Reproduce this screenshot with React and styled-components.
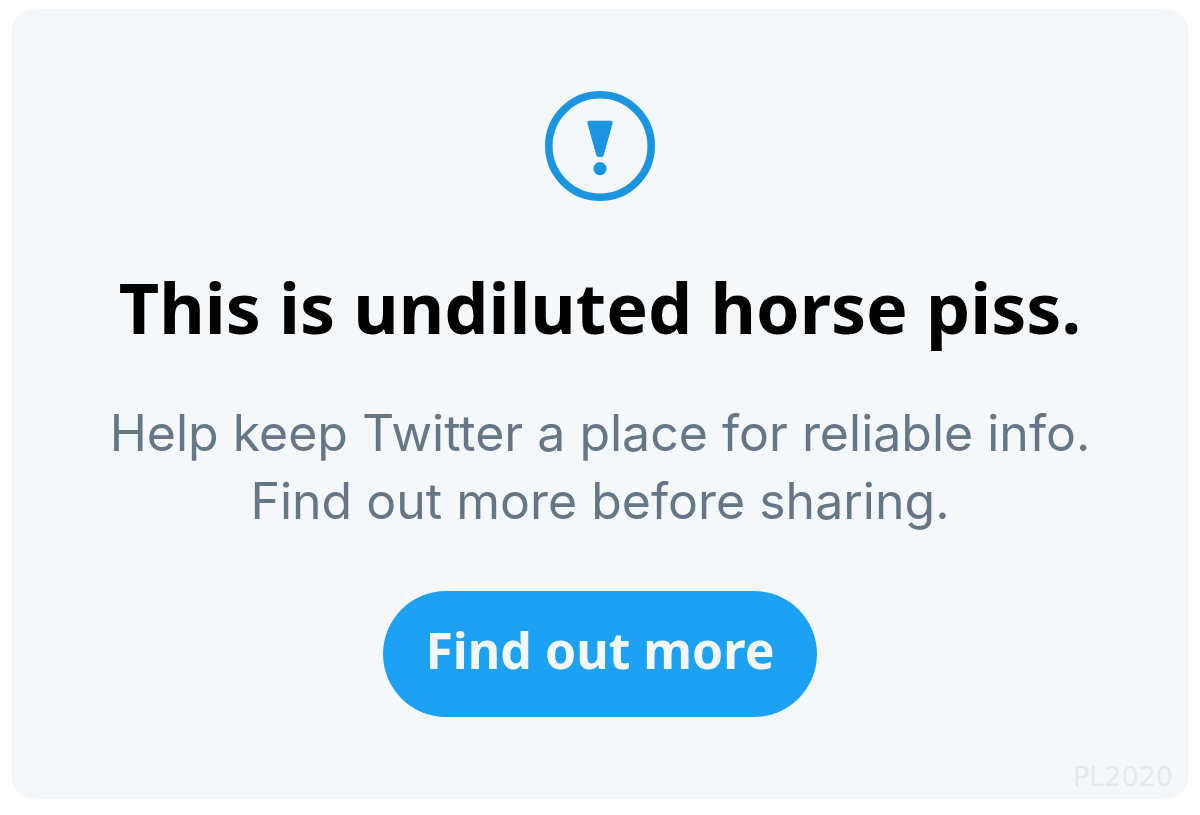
import React from 'react'
import styled, { createGlobalStyle } from 'styled-components'

const GlobalStyle = createGlobalStyle`
    * {
        box-sizing: border-box;
    }
    body {
        margin: 0;
        background: #ffffff;
    }
`
const Page = styled.main`
    display: flex;
    flex-direction: column;
    min-height: 100vh;
    padding: 9px 11px 16px;
`
const Card = styled.section`
    display: flex;
    flex-direction: column;
    align-items: center;
    flex-grow: 1;
    padding: 82px 16px 8px;
    border-radius: 24px;
    background: #f4f8fb;
    text-align: center;
`
const Icon = styled.svg`
    display: block;
    width: 110px;
    height: 110px;
`
const Title = styled.h1`
    margin: 56px 0 0;
    font-family: "Noto Sans", sans-serif;
    font-weight: 700;
    font-size: 70px;
    line-height: 100px;
    color: #000000;
`
const Descr = styled.p`
    margin: 42px 0 0;
    font-family: Inter, sans-serif;
    font-size: 50px;
    line-height: 68px;
    color: #657786;
`
const Line = styled.span`
    display: block;
`
const MoreButton = styled.button`
    margin: 56px 0 0;
    padding: 0 42px 8px;
    height: 126px;
    border: 0;
    border-radius: 63px;
    background: #1da1f2;
    font-family: "Noto Sans", sans-serif;
    font-weight: 700;
    font-size: 50px;
    line-height: 68px;
    color: #f4f8fb;
    cursor: pointer;
`
const Mark = styled.small`
    align-self: flex-end;
    margin-top: auto;
    font-family: "DejaVu Sans", sans-serif;
    font-size: 27px;
    line-height: 28px;
    color: #e4e8e9;
`

const App = () => {
    return (
        <>
            <GlobalStyle />
            <Page>
                <Card>
                    <Icon viewBox="0 0 110 110" aria-hidden="true">
                        <circle cx="55" cy="55" r="51.2" fill="none" stroke="#1b95e0" strokeWidth="7.6" />
                        <path d="M44.8 29.7H65.2Q68.2 29.7 67.5 32.8L58.9 63.5Q58.2 66 56.5 66H53.5Q51.8 66 51.1 63.5L42.5 32.8Q41.8 29.7 44.8 29.7Z" fill="#1b95e0" />
                        <circle cx="55" cy="77.7" r="6.6" fill="#1b95e0" />
                    </Icon>
                    <Title>This is undiluted horse piss.</Title>
                    <Descr>
                        <Line>Help keep Twitter a place for reliable info.</Line>
                        <Line>Find out more before sharing.</Line>
                    </Descr>
                    <MoreButton type="button">Find out more</MoreButton>
                    <Mark>PL2020</Mark>
                </Card>
            </Page>
        </>
    )
}

export default App;
